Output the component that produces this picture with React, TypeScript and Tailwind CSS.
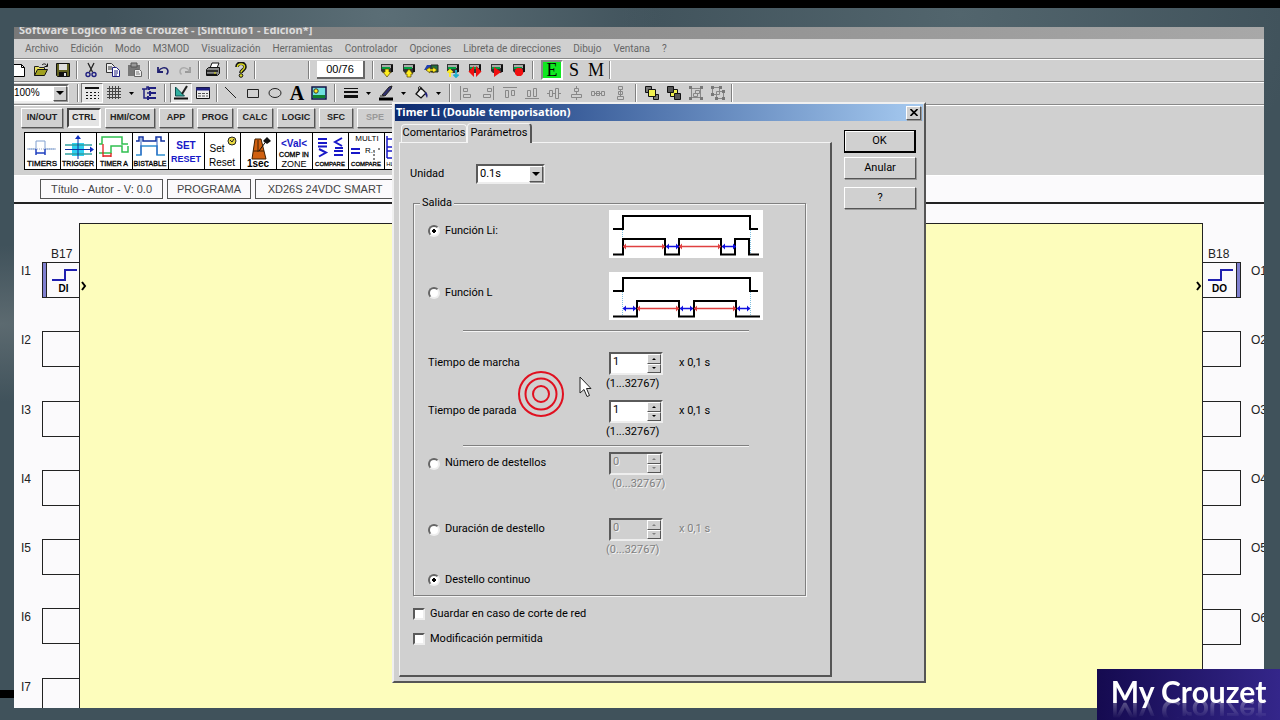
import type { ReactNode } from "react";
import clsx from "clsx";

const MENU = [
  "Archivo",
  "Edición",
  "Modo",
  "M3MOD",
  "Visualización",
  "Herramientas",
  "Controlador",
  "Opciones",
  "Libreta de direcciones",
  "Dibujo",
  "Ventana",
  "?",
];

const CATEGORIES = [
  { name: "IN/OUT", width: "w-[42px]" },
  { name: "CTRL", width: "w-[34px]" },
  { name: "HMI/COM", width: "w-[50px]" },
  { name: "APP", width: "w-[34px]" },
  { name: "PROG", width: "w-[36px]" },
  { name: "CALC", width: "w-[36px]" },
  { name: "LOGIC", width: "w-[38px]" },
  { name: "SFC", width: "w-[34px]" },
  { name: "SPE", width: "w-[36px]" },
];

const raised =
  "border border-t-white border-l-white border-r-[#555] border-b-[#555] shadow-[1px_1px_0_#999]";
const sunken =
  "border-2 border-t-[#5a5a5a] border-l-[#5a5a5a] border-r-[#eee] border-b-[#eee]";

/* ---------- toolbar helpers ---------- */

function Sep({ wide }: { wide?: boolean }) {
  return (
    <div
      className={clsx(
        "flex shrink-0 justify-center self-stretch py-0.5",
        wide ? "w-2.5" : "w-1.5",
      )}
    >
      <div className="w-0.5 border-l border-[#808080] bg-white" />
    </div>
  );
}

interface ToolProps {
  label: string;
  pressed?: boolean;
  children: ReactNode;
}

function Tool({ label, pressed, children }: ToolProps) {
  return (
    <button
      type="button"
      aria-label={label}
      className={clsx(
        "flex h-5 w-[22px] shrink-0 items-center justify-center",
        pressed &&
          "border border-t-[#777] border-l-[#777] border-r-white border-b-white bg-[#e8e8e8]",
      )}
    >
      <svg width="16" height="16" viewBox="0 0 16 16" fill="none">
        {children}
      </svg>
    </button>
  );
}

function Arrow({ label }: { label: string }) {
  return (
    <button
      type="button"
      aria-label={label}
      className="flex h-5 w-[13px] shrink-0 items-center justify-center"
    >
      <svg width="5" height="3" viewBox="0 0 5 3">
        <path d="M0 0h5L2.5 3z" fill="#000" />
      </svg>
    </button>
  );
}

// Little controller used by all the transfer icons
function Plc() {
  return (
    <>
      <path d="M2 2h12v7l-2 2H4L2 9z" fill="#333" />
      <path d="M3 3h9v3H3z" fill="#aaa" />
      <path d="M3 5h8v2H3z" fill="#00a040" />
      <path d="M13 3v7" stroke="#111" strokeWidth="2" />
    </>
  );
}

function StandardBar() {
  return (
    <div className="-ml-1.5 flex h-[22px] items-center">
      <Tool label="Nuevo">
        <path d="M2.500 2.500h8l3 3v9h-11z" fill="#fff" stroke="#000" />
        <path d="M10.500 2.500v3h3" stroke="#000" />
      </Tool>
      <Tool label="Abrir">
        <path d="M1.500 13.500v-9h4l1 1h5v2" fill="#e8e060" stroke="#222" />
        <path d="M1.500 13.500l3-6h10l-3 6z" fill="#a0a020" stroke="#111" />
        <path d="M9 3c2-2 4-1 5 1M14.500 1.500v3h-3" stroke="#111" />
      </Tool>
      <Tool label="Guardar">
        <path d="M1.500 1.500h13v13h-12l-1-1z" fill="#606020" stroke="#111" />
        <path d="M4 2h8v6H4z" fill="#ddd" />
        <path d="M4 10h8v4H4z" fill="#111" />
        <path d="M9 11h2v3H9z" fill="#ddd" />
      </Tool>
      <Sep />
      <Tool label="Cortar">
        <path d="M5 1l4.500 9M11 1L6.500 10" stroke="#222" strokeWidth="1.300" />
        <circle cx="5" cy="12.500" r="2" stroke="#202080" strokeWidth="1.400" />
        <circle cx="11" cy="12.500" r="2" stroke="#202080" strokeWidth="1.400" />
      </Tool>
      <Tool label="Copiar">
        <path d="M1.500 1.500h5l3 3v6h-8z" fill="#eee" stroke="#333" />
        <path d="M3 5h4M3 7h4" stroke="#333" />
        <path d="M7.500 5.500h4l3 3v6h-7z" fill="#fff" stroke="#202080" />
        <path d="M9 9h4M9 11h4M9 13h3" stroke="#202080" />
      </Tool>
      <Tool label="Pegar">
        <path d="M1 3h12v11H1z" fill="#777" />
        <path d="M4 1h6v4H4z" fill="#999" stroke="#555" />
        <path d="M7.500 7.500h5l2 2v5h-7z" fill="#eee" stroke="#666" />
        <path d="M9 10h3M9 12h4" stroke="#777" />
      </Tool>
      <Sep />
      <Tool label="Deshacer">
        <path d="M3 5v5h5" stroke="#202070" strokeWidth="1.800" />
        <path d="M3.500 9.500c2-4 7-5 9-2 1 2 0 4-1 5" stroke="#202070" strokeWidth="1.500" />
      </Tool>
      <Tool label="Rehacer">
        <path d="M13 5v5H8" stroke="#999" strokeWidth="1.800" />
        <path d="M12.500 9.500c-2-4-7-5-9-2-1 2 0 4 1 5" stroke="#aaa" strokeWidth="1.500" />
      </Tool>
      <Sep />
      <Tool label="Imprimir">
        <path d="M5 6l2-5h7l-2 5z" fill="#fff" stroke="#111" />
        <path d="M1.500 7.500l2-2h11v6l-2 2h-11z" fill="#888" stroke="#111" />
        <path d="M2 9h11M2 12.500h10" stroke="#111" strokeWidth="1.500" />
        <path d="M9 11h2" stroke="#e0e000" />
      </Tool>
      <Sep />
      <Tool label="Ayuda">
        <path d="M4 5c0-5 8-5 8 0 0 3-4 3-4 6" stroke="#111" strokeWidth="3.600" />
        <path d="M4.500 5c0-4 7-4 7 0 0 3-3.500 3-3.500 5.500" stroke="#d8d820" strokeWidth="1.500" />
        <circle cx="8" cy="13.500" r="1.800" fill="#d8d820" stroke="#111" />
      </Tool>
      <Sep />
      <div className="w-12" />
      <Sep />
      <output className="mx-[5px] flex h-[18px] w-12 items-center justify-center border-r-2 border-b-2 border-[#666] bg-white text-[11px] text-black">
        00/76
      </output>
      <Sep />
      <Tool label="Escribir en el controlador">
        <Plc />
        <path d="M6 7h4v3h2l-4 5-4-5h2z" fill="#ffee20" stroke="#554400" strokeWidth=".7" />
      </Tool>
      <Tool label="Leer el controlador">
        <Plc />
        <path d="M6 15h4v-3h2L8 7l-4 5h2z" fill="#ffee20" stroke="#554400" strokeWidth=".7" />
      </Tool>
      <Tool label="Comparar">
        <path d="M1 8l3-5h5l-2 5z" fill="#2040b0" />
        <path d="M8 3h7v7H8z" fill="#207040" stroke="#222" />
        <path d="M3 8l4-3v2h3V5l4 3-4 3V9H7v2z" fill="#ffee20" stroke="#554400" strokeWidth=".7" />
      </Tool>
      <Tool label="Monitor">
        <Plc />
        <path d="M5 15V8M2.500 10.500L5 8l2.500 2.500" stroke="#ffee20" strokeWidth="1.800" />
        <path d="M11 8v7M8.500 12.500L11 15l2.500-2.500" stroke="#20b0d0" strokeWidth="1.800" />
      </Tool>
      <Tool label="Marcha con inicialización">
        <Plc />
        <path d="M7 4v11L1.500 9.500zM9 4v11l5.500-5.500z" fill="#f01010" />
      </Tool>
      <Tool label="Marcha">
        <Plc />
        <path d="M5 5v10l7-5z" fill="#f01010" />
      </Tool>
      <Tool label="Parada">
        <Plc />
        <path d="M4 8l2-2h4l2 2v4l-2 2H6l-2-2z" fill="#f01010" />
      </Tool>
      <Sep />
      <div className="ml-[5px] flex font-['Liberation_Serif',serif] text-[18px] leading-5 text-black">
        <button
          type="button"
          className="w-[22px] border-2 border-t-[#888] border-l-[#888] border-r-white border-b-white bg-[#10e820] leading-4"
        >
          E
        </button>
        <button type="button" className="w-[22px]">
          S
        </button>
        <button type="button" className="w-[22px]">
          M
        </button>
      </div>
      <Sep />
    </div>
  );
}

function DrawingBar() {
  return (
    <div className="flex h-[22px] items-center">
      <div className="relative mr-1.5 h-[19px] w-[55px]">
        <select
          aria-label="Zoom"
          className="block h-full w-full appearance-none border-2 border-l-0 border-t-[#666] border-r-[#eee] border-b-[#eee] bg-white text-[10px] leading-3 text-black"
        >
          <option>100%</option>
        </select>
        <DropGlyph />
      </div>
      <Sep />
      <Tool label="Casillas" pressed>
        <path d="M1 3h14" stroke="#111" strokeWidth="2" />
        <path d="M2 7.500h13M2 10.500h13M2 13.500h13" stroke="#111" strokeDasharray="2 2" />
      </Tool>
      <Tool label="Rejilla">
        <path
          d="M3.500 1v13M6.500 1v13M9.500 1v13M12.500 1v13M1 3.500h14M1 6.500h14M1 9.500h14M1 12.500h14"
          stroke="#444"
        />
      </Tool>
      <Arrow label="Opciones de rejilla" />
      <Tool label="Conexiones">
        <path d="M1 4h5V2h2M3 4v9h3M6 8h3" stroke="#202080" strokeWidth="1.500" />
        <path d="M7 3h8M9 8h6M7 13h8M8 2v3M9 6v5M7 11v4" stroke="#202080" strokeWidth="2" />
      </Tool>
      <Sep wide />
      <Tool label="Dibujar" pressed>
        <path d="M2.500 2v9h9z" fill="#30b0a0" stroke="#105050" />
        <path d="M9 9l5-8" stroke="#222" strokeWidth="2" />
        <path d="M1 13.500h14" stroke="#111" strokeWidth="2" />
      </Tool>
      <Tool label="Ventana">
        <path d="M1.500 2.500h13v11h-13z" fill="#eee" stroke="#111" />
        <path d="M1 4h14" stroke="#202080" strokeWidth="3" />
        <path d="M3 8.500h10M3 11h10" stroke="#555" strokeDasharray="3 1" />
      </Tool>
      <Sep />
      <Tool label="Línea">
        <path d="M2 2l11 11" stroke="#222" />
      </Tool>
      <Tool label="Rectángulo">
        <path d="M2.500 4.500h11v8h-11z" stroke="#222" />
      </Tool>
      <Tool label="Elipse">
        <ellipse cx="8" cy="8" rx="6" ry="4.500" stroke="#222" />
      </Tool>
      <button
        type="button"
        className="w-[22px] font-['Liberation_Serif',serif] text-[20px] leading-5 font-bold text-black"
      >
        A
      </button>
      <Tool label="Imagen">
        <path d="M1 2h14v12H1z" fill="#70e0e0" stroke="#114" strokeWidth="1.500" />
        <path d="M2 10h12v3H2z" fill="#108030" />
        <circle cx="5" cy="6" r="2.200" fill="#ffee20" stroke="#333" />
      </Tool>
      <Sep wide />
      <Tool label="Grosor">
        <path d="M1 3.500h14" stroke="#111" />
        <path d="M1 7h14" stroke="#111" strokeWidth="2" />
        <path d="M1 11.500h14" stroke="#111" strokeWidth="3" />
      </Tool>
      <Arrow label="Opciones de grosor" />
      <Tool label="Color de línea">
        <path d="M4 10l7-8 3-1-1 3-6 7z" fill="#303070" stroke="#222" />
        <path d="M2 11h4" stroke="#222" />
        <path d="M1 14h14" stroke="#000" strokeWidth="3" />
      </Tool>
      <Arrow label="Opciones de color de línea" />
      <Tool label="Relleno">
        <path d="M3 9l5-6 5 5-5 5z" fill="#eee" stroke="#111" strokeWidth="1.300" />
        <path d="M6 5c-2-4 2-5 3 0" stroke="#111" />
        <path d="M12 7c3 1 3 4 2 6-1-1-1-3-2-4z" fill="#202080" />
      </Tool>
      <Arrow label="Opciones de relleno" />
      <Sep wide />
      <Tool label="Alinear a la izquierda">
        <path d="M2.500 1v14M5.500 3.500h4v3h-4zM5.500 9.500h7v3h-7z" stroke="#888" />
      </Tool>
      <Tool label="Alinear a la derecha">
        <path d="M13.500 1v14M7.500 3.500h4v3h-4zM3.500 9.500h7v3h-7z" stroke="#888" />
      </Tool>
      <Tool label="Alinear arriba">
        <path d="M1 2.500h14M3.500 5.500h3v7h-3zM9.500 5.500h3v5h-3z" stroke="#888" />
      </Tool>
      <Tool label="Alinear abajo">
        <path d="M1 13.500h14M3.500 5.500h3v6h-3zM9.500 3.500h3v8h-3z" stroke="#888" />
      </Tool>
      <Tool label="Centrar en vertical">
        <path d="M1 8.500h2M7 8.500h2M13 8.500h2M3.500 5.500h3v6h-3zM9.500 3.500h3v10h-3z" stroke="#888" />
      </Tool>
      <Tool label="Centrar en horizontal">
        <path d="M8.500 1v2M8.500 7v2M8.500 13v2M6.500 3.500h4v3h-4zM3.500 9.500h10v3h-10z" stroke="#888" />
      </Tool>
      <Tool label="Distribuir en horizontal">
        <path d="M1.500 6.500h3v4h-3zM6.500 6.500h3v4h-3zM11.500 6.500h3v4h-3zM4 8.500h8" stroke="#888" />
      </Tool>
      <Tool label="Distribuir en vertical">
        <path d="M6.500 1.500h4v3h-4zM6.500 6.500h4v3h-4zM5.500 11.500h6v3h-6zM8.500 4v8" stroke="#888" />
      </Tool>
      <Sep wide />
      <Tool label="Traer al frente">
        <path d="M1.500 1.500h6v6h-6zM9.500 9.500h5v5h-5z" fill="#777" stroke="#111" />
        <path d="M4.500 4.500h7v7h-7z" fill="#f0f050" stroke="#111" />
      </Tool>
      <Tool label="Enviar al fondo">
        <path d="M4.500 4.500h7v7h-7z" fill="#f0f050" stroke="#111" />
        <path d="M1.500 1.500h6v6h-6zM8.500 8.500h6v6h-6z" fill="#555" stroke="#111" />
      </Tool>
      <Tool label="Agrupar">
        <path d="M3.500 3.500h9v9h-9zM5.500 8.500h4v3h-4zM7.500 5.500h4v3h-4z" stroke="#888" />
        <path d="M1 1h3v3H1zM12 1h3v3h-3zM1 12h3v3H1zM12 12h3v3h-3z" fill="#777" />
      </Tool>
      <Tool label="Desagrupar">
        <path d="M2.500 2.500h7v7h-7zM6.500 6.500h7v7h-7z" stroke="#888" />
        <path d="M1 1h3v3H1zM9 1h3v3H9zM1 8h3v3H1zM12 5h3v3h-3zM5 12h3v3H5zM12 12h3v3h-3z" fill="#777" />
      </Tool>
      <Sep />
    </div>
  );
}

function DropGlyph() {
  return (
    <span
      className={clsx(
        "pointer-events-none absolute top-0.5 right-0.5 bottom-0.5 flex w-3.5 items-center justify-center bg-[#d0d0d0]",
        raised,
      )}
    >
      <svg width="8" height="4" viewBox="0 0 8 4">
        <path d="M0 0h8L4 4z" fill="#000" />
      </svg>
    </span>
  );
}

/* ---------- function block palette ---------- */

function Block({ label, children }: { label: string; children: ReactNode }) {
  return (
    <button
      type="button"
      aria-label={label}
      className="h-9 w-9 shrink-0 overflow-hidden border-r border-black bg-white"
    >
      <svg
        width="35"
        height="34"
        viewBox="0 0 35 34"
        fill="none"
        fontFamily="'Liberation Sans', sans-serif"
        textAnchor="middle"
      >
        {children}
      </svg>
    </button>
  );
}

function Caption({ children }: { children: string }) {
  return (
    <text x="17" y="32" fontSize="7" fill="#000" stroke="#000" strokeWidth=".3">
      {children}
    </text>
  );
}

function Palette() {
  return (
    <div className="ml-2.5 flex w-[380px] overflow-hidden border border-black bg-white">
      <Block label="TIMERS">
        <path d="M2 15h30" stroke="#9ac" strokeDasharray="1 1" />
        <path d="M3 15h8V7h9v8h10" stroke="#80a0d0" />
        <path d="M11 15v6M20 15v6M11 19h9" stroke="#2040c0" strokeWidth="1.500" />
        <text x="17" y="32" fontSize="8" fill="#000" stroke="#000" strokeWidth=".3">
          TIMERS
        </text>
      </Block>
      <Block label="TRIGGER">
        <path d="M11 9h12v13H11z" fill="#30d0f0" />
        <path d="M4 11h27M4 20h27" stroke="#30a0a0" strokeWidth="1.300" />
        <path d="M4 15.500h27M17 3v22" stroke="#1030a0" />
        <path d="M17 1l-3 4h6zM33 15.500l-4-3v6z" fill="#1030c0" />
        <Caption>TRIGGER</Caption>
      </Block>
      <Block label="TIMER A/C">
        <path d="M2 10h3V3h20v7h6" stroke="#30c050" strokeWidth="1.500" />
        <path d="M2 19h12v-7h11v6h6v-6" stroke="#30c050" strokeWidth="1.500" />
        <path d="M6 10v13M14 19v4M6 22h8" stroke="#e02020" strokeWidth="1.300" />
        <Caption>TIMER A</Caption>
      </Block>
      <Block label="BISTABLE">
        <path d="M3 7h3V3h4v4h13V3h5v4h4" stroke="#1030a0" strokeWidth="1.500" />
        <path d="M3 21h5v-9h16v9h8" stroke="#3090d0" strokeWidth="1.500" />
        <path d="M8 4v17M24 4v17" stroke="#3060c0" />
        <Caption>BISTABLE</Caption>
      </Block>
      <Block label="SET RESET">
        <text x="17" y="15" fontSize="10" fontWeight="bold" fill="#1818c8">
          SET
        </text>
        <text x="17" y="28" fontSize="9" fontWeight="bold" fill="#1818c8">
          RESET
        </text>
      </Block>
      <Block label="Set Reset">
        <text x="12" y="18" fontSize="10" fill="#000">
          Set
        </text>
        <text x="17" y="32" fontSize="10" fill="#000">
          Reset
        </text>
        <circle cx="27" cy="7" r="4" fill="#e8d840" stroke="#222" />
        <path d="M25 6l2 2 2-3" stroke="#222" />
      </Block>
      <Block label="1 sec">
        <path d="M14 5h6l5 20H11z" fill="#d06010" stroke="#402000" />
        <path d="M12 17h11M17 6v12" stroke="#402000" />
        <path d="M18 17l8-11" stroke="#111" />
        <path d="M26 3l4 4-4 3-4-3z" fill="#111" />
        <text x="17" y="33" fontSize="10" fontWeight="bold" fill="#000">
          1sec
        </text>
      </Block>
      <Block label="COMP IN ZONE">
        <text x="17" y="13" fontSize="10" fontWeight="bold" fill="#1818c8">
          &lt;Val&lt;
        </text>
        <text x="17" y="23" fontSize="7" fill="#000" stroke="#000" strokeWidth=".3">
          COMP IN
        </text>
        <text x="17" y="33" fontSize="9" fill="#000">
          ZONE
        </text>
      </Block>
      <Block label="COMPARE">
        <g stroke="#1818c8" strokeWidth="2">
          <path d="M5 5h9M5 9h9M5 12.500h9M6 15l7 3.500-7 4M29 4l-7 4 7 4M22 14h8M21 17h9M21 21h9" />
        </g>
        <text x="17" y="32" fontSize="6" fill="#000" stroke="#000" strokeWidth=".3">
          COMPARE
        </text>
      </Block>
      <Block label="MULTI COMPARE">
        <text x="18" y="7" fontSize="8" fill="#000">
          MULTI
        </text>
        <path d="M2 15h9M2 19h9" stroke="#1818c8" strokeWidth="2" />
        <text x="21" y="19" fontSize="8" fill="#000">
          R..
        </text>
        <path d="M25 16v10M30 14v4" stroke="#111" strokeDasharray="2 2" />
        <text x="17" y="32" fontSize="6" fill="#000" stroke="#000" strokeWidth=".3">
          COMPARE
        </text>
      </Block>
      <Block label="HL">
        <path d="M2 2v22M2 5h8M2 13h8M2 17h8M2 24h8" stroke="#1818c8" strokeWidth="1.500" />
        <text x="5" y="32" fontSize="6" fill="#000">
          HL
        </text>
      </Block>
    </div>
  );
}

/* ---------- wiring sheet ---------- */

interface PinProps {
  name: string;
  side: "in" | "out";
  block?: string;
}

function Pin({ name, side, block }: PinProps) {
  const isInput = side === "in";
  return (
    <div
      className={clsx(
        "relative flex flex-1 items-start",
        isInput ? "pl-[7px]" : "flex-row-reverse justify-end",
      )}
    >
      <span className={clsx("shrink-0 text-[12px] leading-[18px]", isInput ? "w-[21px]" : "pl-2.5")}>
        {name}
      </span>
      <div
        className={clsx(
          "flex h-9 w-[38px] shrink-0 border border-[#222]",
          isInput ? "border-r-0" : "flex-row-reverse border-l-0",
        )}
      >
        {block && (
          <>
            <div
              className={clsx(
                "w-1 bg-[#8080d0]",
                isInput ? "border-r border-[#222]" : "border-l border-[#222]",
              )}
            />
            <div className="flex flex-1 flex-col items-center">
              <svg width="28" height="18" viewBox="0 0 28 18" fill="none" className="shrink-0">
                <path d="M2 17h13V7h12" stroke="#2020b0" strokeWidth="2" />
              </svg>
              <span className="text-[10px] leading-4 font-bold text-black">
                {isInput ? "DI" : "DO"}
              </span>
            </div>
          </>
        )}
      </div>
      {block && (
        <>
          <span
            className={clsx(
              "absolute -top-4 text-[12px] leading-4",
              isInput ? "left-[37px]" : "left-[5px]",
            )}
          >
            {block}
          </span>
          <svg
            width="6"
            height="10"
            viewBox="0 0 6 10"
            fill="none"
            className={clsx("absolute top-[19px]", isInput ? "-right-2" : "-left-[7px]")}
          >
            <path d="M1 1l3 4-3 4" stroke="#000" strokeWidth="2" />
          </svg>
        </>
      )}
    </div>
  );
}

function Sheet() {
  return (
    <main className="flex min-h-0 flex-1 overflow-hidden bg-[#fbfafc] pt-[19px] text-[#222]">
      <div className="z-10 w-[65px] shrink-0 pt-[39px]">
        <div className="flex h-[485px] flex-col">
          {["I1", "I2", "I3", "I4", "I5", "I6", "I7"].map((name, i) => (
            <Pin key={name} name={name} side="in" block={i === 0 ? "B17" : undefined} />
          ))}
        </div>
      </div>
      <div className="flex-1 border border-b-0 border-[#222] bg-[#fdfdbc]" />
      <div className="z-10 w-[61px] shrink-0 pt-[39px]">
        <div className="flex h-[416px] flex-col">
          {["O1", "O2", "O3", "O4", "O5", "O6"].map((name, i) => (
            <Pin key={name} name={name} side="out" block={i === 0 ? "B18" : undefined} />
          ))}
        </div>
      </div>
    </main>
  );
}

/* ---------- timer dialog ---------- */

const radioClass =
  "size-3 shrink-0 appearance-none rounded-full border-2 border-t-[#666] border-l-[#666] border-r-[#eee] border-b-[#eee] bg-white checked:bg-[radial-gradient(circle,#000_0_2px,#fff_2px)]";

interface RadioProps {
  group: string;
  label: string;
  checked?: boolean;
}

function Radio({ group, label, checked }: RadioProps) {
  return (
    <label className="flex items-center gap-[5px]">
      <input type="radio" name={group} defaultChecked={checked} className={radioClass} />
      {label}
    </label>
  );
}

interface SpinProps {
  label: string;
  value: string;
  range: string;
  unit?: boolean;
  disabled?: boolean;
  indent?: boolean;
  children: ReactNode;
}

function SpinRow({ label, value, range, unit, disabled, indent, children }: SpinProps) {
  const muted = disabled && "text-[#808080] [text-shadow:1px_1px_0_#f4f4f4]";
  return (
    <div className="h-[42px]">
      <div className="flex h-[23px] items-center">
        <div className="w-[181px]">{children}</div>
        <div className={clsx("flex h-[23px] w-[54px]", sunken, disabled ? "bg-[#d0d0d0]" : "bg-white")}>
          <input
            aria-label={label}
            defaultValue={value}
            disabled={disabled}
            className={clsx("w-0 flex-1 self-start bg-transparent px-0.5 text-[11px] leading-4", muted)}
          />
          <div className="flex w-3.5 flex-col bg-[#d0d0d0]">
            {["M0 2h4L2 0z", "M0 0h4L2 2z"].map((d, i) => (
              <button
                key={d}
                type="button"
                disabled={disabled}
                aria-label={i === 0 ? "Aumentar" : "Disminuir"}
                className="flex flex-1 items-center justify-center border border-t-white border-l-white border-r-[#555] border-b-[#555]"
              >
                <svg width="4" height="2" viewBox="0 0 4 2">
                  <path d={d} fill={disabled ? "#808080" : "#000"} />
                </svg>
              </button>
            ))}
          </div>
        </div>
        {unit && <span className={clsx("ml-4", muted)}>x 0,1 s</span>}
      </div>
      <div className={clsx("pt-px leading-4", indent ? "pl-[184px]" : "pl-[178px]", muted)}>{range}</div>
    </div>
  );
}

function Rule() {
  return <hr className="mx-[35px] h-0.5 w-[286px] border-t border-[#808080] bg-[#f4f4f4]" />;
}

// Timing chart: command on top, output below with on (red) and off (blue) spans
function Chart({ output, on, off }: { output: string; on: number[][]; off: number[][] }) {
  const span = ([a, b]: number[], color: string) => (
    <g key={a} stroke={color} fill={color}>
      <path d={`M${a} 36.500H${b}`} strokeWidth="1.500" />
      <path d={`M${a} 36.500l3-3v6zM${b} 36.500l-3-3v6z`} stroke="none" />
    </g>
  );
  return (
    <svg width="154" height="48" viewBox="0 0 154 48" fill="none" className="shrink-0 bg-white">
      <path d="M13.500 6v38M141.500 6v38" stroke="#80c0e0" strokeDasharray="1 1" />
      <path d="M4 19h10V6h127v13h8" stroke="#000" strokeWidth="2" />
      <path d={output} stroke="#000" strokeWidth="2" />
      {on.map((s) => span(s, "#e04040"))}
      {off.map((s) => span(s, "#1010e0"))}
    </svg>
  );
}

function TimerDialog() {
  return (
    <section
      role="dialog"
      aria-label="Timer Li"
      className="absolute top-[75px] left-[378px] z-20 w-[534px] border-2 border-t-[#f0f0f0] border-l-[#f0f0f0] border-r-[#555] border-b-[#555] bg-[#d0d0d0] px-px font-[Roboto,'Liberation_Sans',sans-serif] text-[11px] text-black"
    >
      <header className="flex h-[17px] items-center justify-between bg-linear-to-r from-[#0c2a70] to-[#a6caf0] pr-0.5 pl-px">
        <h2 className="font-['Noto_Sans','DejaVu_Sans',sans-serif] text-[11px] font-bold text-white">
          Timer Li (Double temporisation)
        </h2>
        <button
          type="button"
          aria-label="Cerrar"
          className={clsx("flex h-3.5 w-[15px] items-center justify-center bg-[#d0d0d0]", raised)}
        >
          <svg width="8" height="7" viewBox="0 0 8 7" fill="none">
            <path d="M.5 0l7 7M7.500 0l-7 7" stroke="#000" strokeWidth="1.600" />
          </svg>
        </button>
      </header>
      <div className="flex gap-3 pt-px pr-[7px] pb-1 pl-1">
        <div className="flex-1">
          <div role="tablist" className="flex items-end pl-0.5">
            <button
              type="button"
              role="tab"
              className="h-[18px] w-[66px] rounded-t-sm border border-b-0 border-[#f4f4f4]"
            >
              Comentarios
            </button>
            <button
              type="button"
              role="tab"
              aria-selected
              className="relative top-px z-10 h-5 w-[65px] rounded-t-sm border border-r-2 border-b-0 border-[#f4f4f4] border-r-[#555] bg-[#d0d0d0]"
            >
              Parámetros
            </button>
          </div>
          <div className="h-[535px] border border-r-2 border-b-2 border-[#f4f4f4] border-r-[#555] border-b-[#555] px-3 pt-[21px]">
            <div className="flex items-center">
              <label htmlFor="unidad" className="-ml-0.5 w-[66px]">
                Unidad
              </label>
              <div className="relative h-5 w-[69px]">
                <select
                  id="unidad"
                  className={clsx("block h-full w-full appearance-none bg-white px-0.5 text-[11px] leading-4", sunken)}
                >
                  <option>0.1s</option>
                </select>
                <DropGlyph />
              </div>
            </div>
            <fieldset className="mt-[11px] mr-3 ml-px h-[401px] border border-[#808080] pl-3.5 shadow-[1px_1px_0_#f4f4f4,inset_1px_1px_0_#f4f4f4]">
              <legend className="-ml-2 bg-[#d0d0d0] px-0.5 leading-4">Salida</legend>
              <div className="-mt-px flex">
                <div className="w-[181px] pt-[13px]">
                  <Radio group="funcion" label="Función Li:" checked />
                </div>
                <Chart
                  output="M4 44.500h10V29h42v15.500h14V29h42v15.500h14V29h14v15.500h10"
                  on={[[14, 56], [70, 112]]}
                  off={[[57, 70], [113, 127]]}
                />
              </div>
              <div className="mt-3.5 flex">
                <div className="w-[181px] pt-[13px]">
                  <Radio group="funcion" label="Función L" />
                </div>
                <Chart
                  output="M4 44.500h24V29h42v15.500h15V29h42v15.500h24"
                  on={[[28, 70], [85, 127]]}
                  off={[[14, 27], [71, 84], [128, 141]]}
                />
              </div>
              <div className="mt-2.5 mb-5">
                <Rule />
              </div>
              <SpinRow label="Tiempo de marcha" value="1" range="(1...32767)" unit>
                Tiempo de marcha
              </SpinRow>
              <div className="mt-1.5 mb-[3px]">
                <SpinRow label="Tiempo de parada" value="1" range="(1...32767)" unit>
                  Tiempo de parada
                </SpinRow>
              </div>
              <Rule />
              <div className="mt-[5px] mb-6">
                <SpinRow label="Número" value="0" range="(0...32767)" disabled indent>
                  <Radio group="destello" label="Número de destellos" />
                </SpinRow>
              </div>
              <SpinRow label="Duración" value="0" range="(0...32767)" unit disabled>
                <Radio group="destello" label="Duración de destello" />
              </SpinRow>
              <div className="mt-3">
                <Radio group="destello" label="Destello continuo" checked />
              </div>
            </fieldset>
            <div className="mt-2.5 flex flex-col gap-[9px]">
              {["Guardar en caso de corte de red", "Modificación permitida"].map((label) => (
                <label key={label} className="flex items-center gap-[5px] leading-4">
                  <input
                    type="checkbox"
                    className={clsx("ml-px size-3 appearance-none bg-white checked:bg-black", sunken)}
                  />
                  {label}
                </label>
              ))}
            </div>
          </div>
        </div>
        <div className="flex w-[72px] flex-col gap-1 pt-2">
          <button type="button" className="h-[23px] border-2 border-t border-l border-black shadow-[inset_1px_1px_0_#fff]">
            OK
          </button>
          <button type="button" className={clsx("h-[22px]", raised)}>
            Anular
          </button>
          <button type="button" className={clsx("mt-1 h-[22px]", raised)}>
            ?
          </button>
        </div>
      </div>
    </section>
  );
}

function ClickMarker() {
  return (
    <svg
      width="76"
      height="50"
      viewBox="0 0 76 50"
      fill="none"
      className="pointer-events-none absolute top-[342px] left-[502px] z-30"
    >
      <g stroke="#e01020" strokeWidth="2">
        <circle cx="25" cy="25" r="22" />
        <circle cx="25" cy="25" r="15.500" />
        <circle cx="25" cy="25" r="8" />
      </g>
      <path d="M64 8v16l4-3.500 3 7 2.500-1-3-7H75z" fill="#fff" stroke="#222" />
    </svg>
  );
}

export default function App() {
  return (
    <div className="relative flex h-screen flex-col overflow-hidden bg-[#40525b] bg-[radial-gradient(ellipse_at_30%_2%,#5b6e76_0,transparent_22%),radial-gradient(ellipse_at_75%_2%,#52656d_0,transparent_25%),radial-gradient(ellipse_at_0%_45%,#5c6a70_0,transparent_14%)] font-['Liberation_Sans',Arial,sans-serif]">
      <div className="h-2 shrink-0 bg-black" />
      <div className="absolute bottom-[22px] left-0 h-2 w-4 bg-black" />
      <div className="mt-[19px] mr-4 mb-3 ml-3.5 flex min-h-0 flex-1">
        <div className="relative flex min-w-0 flex-1 flex-col overflow-hidden bg-[#d0d0d0]">
          <header className="flex h-3 shrink-0 items-center overflow-hidden bg-linear-to-r from-[#787878] to-[#a8a8a8] pl-[5px]">
            <h1 className="-mt-1.5 font-['Noto_Sans','DejaVu_Sans',sans-serif] text-[11px] leading-3 font-bold whitespace-nowrap text-[#dcdcdc]">
              Software Logico M3 de Crouzet - [Sintitulo1 - Edicion*]
            </h1>
          </header>
          <nav className="flex h-[19px] shrink-0 items-center gap-3 pl-[11px] font-[Roboto,'Noto_Sans',sans-serif] text-[10px] text-[#666]">
            {MENU.map((item) => (
              <a key={item} href="#" className="whitespace-nowrap">
                {item}
              </a>
            ))}
          </nav>
          <div className="shrink-0 border-t border-[#888] shadow-[inset_0_1px_0_#fff]">
            <StandardBar />
          </div>
          <div className="shrink-0 border-y border-[#888] shadow-[inset_0_1px_0_#fff]">
            <DrawingBar />
          </div>
          <div className="h-[70px] shrink-0 border-t border-white pt-0.5">
            <div className="flex gap-1 pb-1 pl-[7px]">
              {CATEGORIES.map(({ name, width }) => (
                <button
                  key={name}
                  type="button"
                  className={clsx(
                    "h-5 text-[9px] font-bold",
                    width,
                    name === "CTRL" ? "border-2 border-t-[#444] border-l-[#444] border-r-white border-b-white bg-[#e4e4e4]" : raised,
                    name === "SPE" ? "text-[#999]" : "text-[#222]",
                  )}
                >
                  {name}
                </button>
              ))}
            </div>
            <Palette />
          </div>
          <div className="flex h-[29px] shrink-0 items-center gap-1 border-t border-b-2 border-t-white border-b-[#222] bg-[#fbfafc] pl-[26px] text-[11px] text-[#444]">
            <span className="flex h-5 w-[123px] items-center justify-center border border-[#555]">
              Título - Autor - V: 0.0
            </span>
            <span className="flex h-5 w-[84px] items-center justify-center border border-[#555]">
              PROGRAMA
            </span>
            <span className="flex h-5 w-[140px] items-center justify-center border border-[#555]">
              XD26S 24VDC SMART
            </span>
          </div>
          <Sheet />
          <TimerDialog />
          <ClickMarker />
        </div>
      </div>
      <div className="absolute right-0 bottom-0 z-40 flex h-[51px] w-[183px] justify-center overflow-hidden bg-linear-to-r from-[#150a50] to-[#34268a] pt-1.5">
        <p className="h-8 font-[Lato,'Open_Sans',sans-serif] text-[30px] leading-8 font-bold whitespace-nowrap text-white [-webkit-box-reflect:below_-11px_linear-gradient(transparent_30%,rgba(255,255,255,0.4))]">
          My Crouzet
        </p>
      </div>
    </div>
  );
}
